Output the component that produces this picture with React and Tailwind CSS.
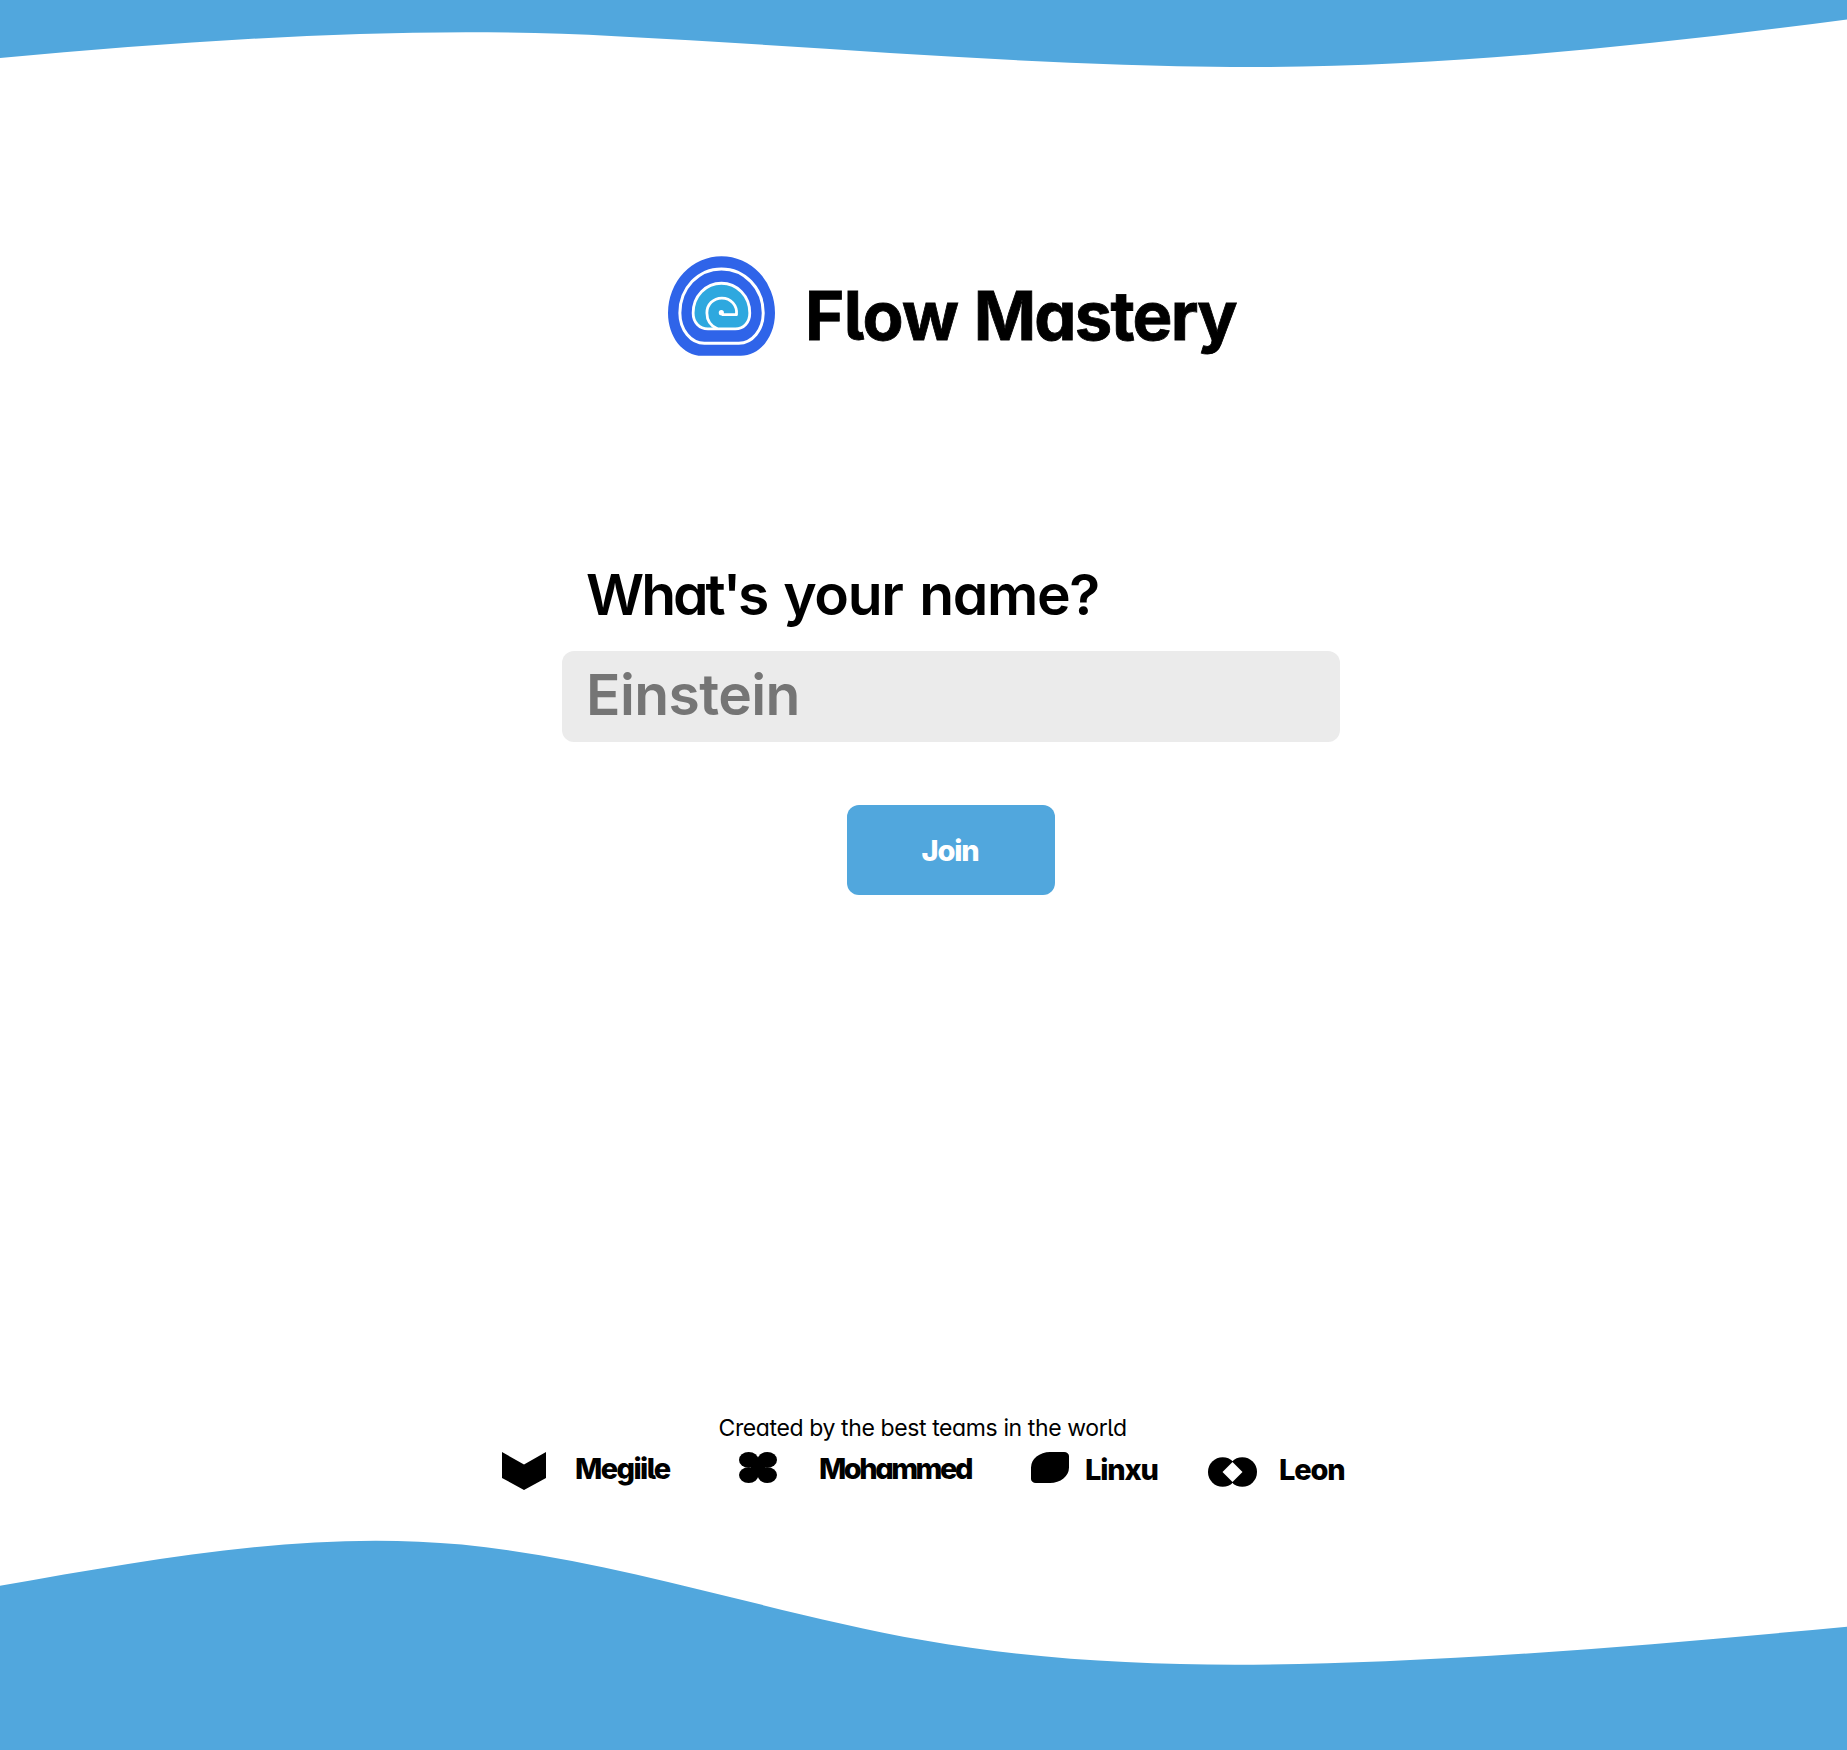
function TopWave() {
  return (
    <svg className="block h-[70px] w-full shrink-0" viewBox="0 0 1847 70" preserveAspectRatio="none" aria-hidden="true">
      <path
        fill="#51a7dd"
        d="M0 0V58C205 39.5 410 25 615.7 36.2C821 46.5 1026 65.5 1231.3 67C1436 68.5 1642 46 1847 19.5V0Z"
      />
    </svg>
  );
}

function BottomWave() {
  return (
    <svg className="block h-[210px] w-full shrink-0" viewBox="0 1540 1847 210" preserveAspectRatio="none" aria-hidden="true">
      <path
        fill="#51a7dd"
        d="M0 1585.7C154 1558.8 308 1530 461.75 1544.6C616 1559.5 770 1613.3 923.5 1640.3C1077 1667.5 1231 1667.5 1385.25 1661.2C1539 1655 1693 1641 1847 1626.7V1750H0Z"
      />
    </svg>
  );
}

function Logo() {
  return (
    <svg className="h-[100px] w-[107px] shrink-0" viewBox="18 16 107.3 100" fill="none" aria-hidden="true">
      <path fill="#2f64e9" d="M18 73A53.65 57 0 0 1 125.3 73C125.3 97 110 116 91 116H52.3C33 116 18 97 18 73Z" />
      <path
        stroke="#fff"
        strokeWidth="3"
        d="M29.9 73C29.9 48 48.5 28.8 71.6 28.8S113.5 48 113.5 73C113.5 90 102.5 103.3 89 103.3H54.5C41 103.3 29.9 90 29.9 73Z"
      />
      <path
        fill="#2ea8df"
        stroke="#fff"
        strokeWidth="2.8"
        d="M43.2 73C43.2 56 56 43.2 71.6 43.2S100 56 100 73C100 82.5 94 88.9 85.5 88.9H58C49.5 88.9 43.2 82.5 43.2 73Z"
      />
      <path
        stroke="#fff"
        strokeWidth="2.8"
        strokeLinejoin="round"
        d="M71.5 73.2L73 74.7H86.7C87.7 65.5 81 58 72 58C63.5 58 57 64.5 57 73C57 80.5 61 86 67.5 88.9"
      />
      <circle cx="71.5" cy="72.7" r="2.6" fill="#fff" />
    </svg>
  );
}

function Chevron() {
  return (
    <svg className="mt-0.5 h-[38px] w-11 shrink-0" viewBox="0 0 44 38" aria-hidden="true">
      <path d="M0 0L22 12.5L44 0V26L22 38L0 26Z" />
    </svg>
  );
}

function Clover() {
  return (
    <svg className="mt-0.5 h-[31px] w-[38px] shrink-0" viewBox="0 0 38 31" aria-hidden="true">
      <ellipse cx="9.7" cy="7.9" rx="9.7" ry="7.9" />
      <ellipse cx="28.3" cy="7.9" rx="9.7" ry="7.9" />
      <ellipse cx="9.7" cy="23.1" rx="9.7" ry="7.9" />
      <ellipse cx="28.3" cy="23.1" rx="9.7" ry="7.9" />
      <path d="M12 8H26V23H12Z" />
    </svg>
  );
}

function Leaf() {
  return (
    <svg className="mt-0.5 h-[31px] w-[38px] shrink-0" viewBox="0 0 38 31" aria-hidden="true">
      <path d="M19 0H33.2A4.8 4 0 0 1 38 4V15.5A19 15.5 0 0 1 19 31H4.8A4.8 4 0 0 1 0 27V15.5A19 15.5 0 0 1 19 0Z" />
    </svg>
  );
}

function Rings() {
  return (
    <svg className="mt-[7px] h-[30px] w-[49px] shrink-0" viewBox="0 0 49 30" aria-hidden="true">
      <circle cx="14.7" cy="15" r="14.7" />
      <circle cx="34.3" cy="15" r="14.7" />
      <path fill="#fff" d="M24.5 5L34.5 15L24.5 25L14.5 15Z" />
      <path fill="#fff" d="M22.8 0L24.5 4.2L26.2 0ZM22.8 30L24.5 25.8L26.2 30Z" />
    </svg>
  );
}

export default function App() {
  return (
    <div className="flex h-[1750px] w-[1847px] flex-col overflow-hidden bg-white font-['Inter',sans-serif] text-black [font-feature-settings:'cv11','cv05']">
      <TopWave />

      <header className="mt-[186px] ml-[668px] flex h-[100px]">
        <Logo />
        <h1 className="mt-5 ml-[30px] text-[67px] leading-[80px] font-bold tracking-[-0.6px] whitespace-nowrap [-webkit-text-stroke:0.8px_black]">
          Flow <span className="tracking-[-1.8px]">Mastery</span>
        </h1>
      </header>

      <main className="mt-[203px] ml-[562px] flex w-[778px] flex-col">
        <label
          htmlFor="name"
          className="pl-6 text-[57px] leading-[72px] font-semibold tracking-[-1.4px] whitespace-nowrap [word-spacing:4px]"
        >
          <span className="tracking-[-3px]">What's</span> your name?
        </label>
        <input
          id="name"
          placeholder="Einstein"
          className="mt-5 h-[91px] w-full rounded-xl bg-[#ebebeb] px-6 pb-1 text-[57px] font-semibold tracking-[-0.6px] outline-none placeholder:text-[#757575]"
        />
        <button className="mt-[63px] h-[90px] w-[208px] self-center rounded-xl bg-[#51a7dd] pt-0.5 pr-0.5 text-[29px] font-extrabold tracking-[-1.2px] text-white">
          Join
        </button>
      </main>

      <footer className="mt-[519px] flex h-[126px] flex-col">
        <p className="ml-[718.5px] text-[23px] leading-[28px] tracking-[-0.39px] whitespace-nowrap">
          Created by the best teams in the world
        </p>
        <div className="mt-2 ml-[502px] flex text-[29px] leading-9 font-extrabold">
          <div className="flex w-[237px] gap-[29px]">
            <Chevron />
            <span className="mt-px tracking-[-1.6px]">Megiile</span>
          </div>
          <div className="flex w-[292px] gap-[42px]">
            <Clover />
            <span className="mt-px tracking-[-2.5px]">Mohammed</span>
          </div>
          <div className="flex w-[177px] gap-4">
            <Leaf />
            <span className="mt-0.5 tracking-[-1.2px]">Linxu</span>
          </div>
          <div className="flex gap-[22px]">
            <Rings />
            <span className="mt-0.5 tracking-[-1.2px]">Leon</span>
          </div>
        </div>
      </footer>

      <BottomWave />
    </div>
  );
}
